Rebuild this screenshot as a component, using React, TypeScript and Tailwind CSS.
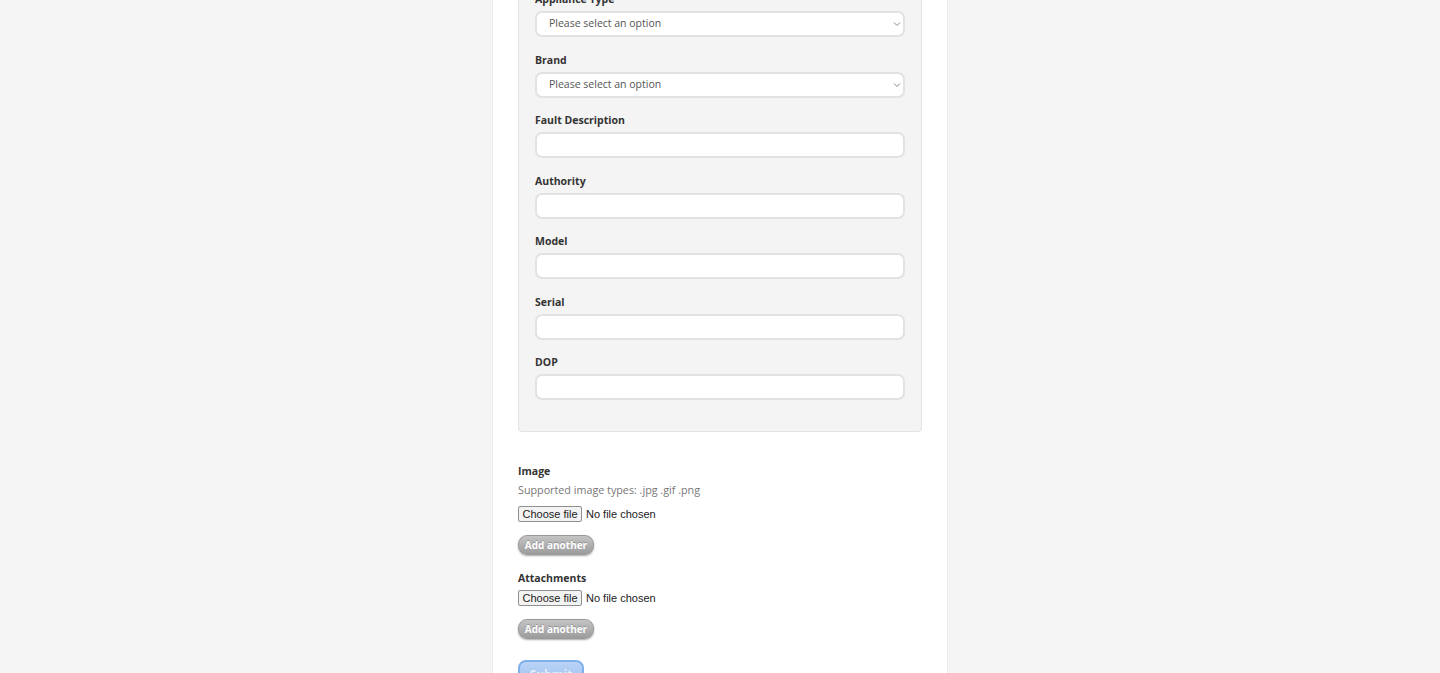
import { useState } from 'react';

const fieldLabel = "block h-4 leading-4 text-[10.5px] font-bold text-[#333]";
const inputBox =
  "block w-[370px] h-[26px] rounded-[7px] border-2 border-[#e2e2e2] bg-white px-3 text-[10.5px] text-[#555] outline-none";

const SelectField = ({ label, name }: { label: string; name: string }) => (
  <div className="flex flex-col gap-1">
    <label htmlFor={name} className={fieldLabel}>
      {label}
    </label>
    <div className="relative w-[370px]">
      <select id={name} name={name} defaultValue="" className={`${inputBox} appearance-none pl-[12px]`}>
        <option value="">Please select an option</option>
      </select>
      {/* chevron */}
      <svg
        className="pointer-events-none absolute right-[4px] top-[10px] h-[6px] w-[8px]"
        viewBox="0 0 8 6"
        fill="none"
        stroke="#888"
        strokeWidth="1"
      >
        <path d="M1 1.5 L4 4.5 L7 1.5" />
      </svg>
    </div>
  </div>
);

const TextField = ({ label, name }: { label: string; name: string }) => (
  <div className="flex flex-col gap-1">
    <label htmlFor={name} className={fieldLabel}>
      {label}
    </label>
    <input id={name} name={name} type="text" className={inputBox} />
  </div>
);

const FileRow = ({ name }: { name: string }) => {
  const [file, setFile] = useState<string | null>(null);
  return (
    <label className="flex h-4 items-center gap-[4px] text-[11px] text-[#222] font-['Liberation_Sans',Arial,sans-serif] cursor-pointer">
      <span className="flex h-4 w-[64px] items-center justify-center rounded-[2px] border border-[#8f8f8f] bg-[#f3f3f3] leading-none">
        Choose file
      </span>
      <span>{file ?? 'No file chosen'}</span>
      <input
        type="file"
        name={name}
        className="hidden"
        onChange={(e) => setFile(e.target.files?.[0]?.name ?? null)}
      />
    </label>
  );
};

const AddAnother = () => (
  <button
    type="button"
    className="flex h-5 w-[76px] items-center justify-center rounded-[9px] border border-[#9a9a9a] bg-gradient-to-b from-[#c4c4c4] to-[#9c9c9c] text-[10px] font-bold text-white shadow-[0_1px_2px_rgba(0,0,0,0.35)] [text-shadow:0_-1px_0_rgba(0,0,0,0.2)]"
  >
    Add another
  </button>
);

export default function App() {
  return (
    <div className="min-h-screen bg-[#f5f5f5] font-['Open_Sans',sans-serif]">
      <div className="mx-auto w-[456px] border-x border-[#ebebeb] bg-white pl-[25px] pr-[25px] pb-10">
        {/* Appliance fieldset */}
        <div className="-mt-[30px] w-[404px] rounded-b-[4px] border border-[#e3e3e3] bg-[#f4f4f4] px-[16px] pt-[20px] pb-[31px]">
          <div className="flex flex-col gap-[14.5px]">
            <SelectField label="Appliance Type" name="appliance_type" />
            <SelectField label="Brand" name="brand" />
            <TextField label="Fault Description" name="fault_description" />
            <TextField label="Authority" name="authority" />
            <TextField label="Model" name="model" />
            <TextField label="Serial" name="serial" />
            <TextField label="DOP" name="dop" />
          </div>
        </div>

        {/* Image */}
        <div className="mt-[31px] flex flex-col">
          <span className={fieldLabel}>Image</span>
          <span className="mt-[3px] h-4 leading-4 text-[10.75px] text-[#777]">
            Supported image types: .jpg .gif .png
          </span>
          <div className="mt-[8px]">
            <FileRow name="image" />
          </div>
          <div className="mt-[13px]">
            <AddAnother />
          </div>
        </div>

        {/* Attachments */}
        <div className="mt-[15px] flex flex-col">
          <span className={fieldLabel}>Attachments</span>
          <div className="mt-[4px]">
            <FileRow name="attachments" />
          </div>
          <div className="mt-[13px]">
            <AddAnother />
          </div>
        </div>

        <button
          type="submit"
          disabled
          className="mt-[21px] flex h-[30px] w-[66px] items-center justify-center rounded-[8px] border-2 border-[#7fb0ee] bg-gradient-to-b from-[#b9d3f5] to-[#98bdf0] text-[12px] font-bold text-white/70"
        >
          Submit
        </button>
      </div>
    </div>
  );
}
